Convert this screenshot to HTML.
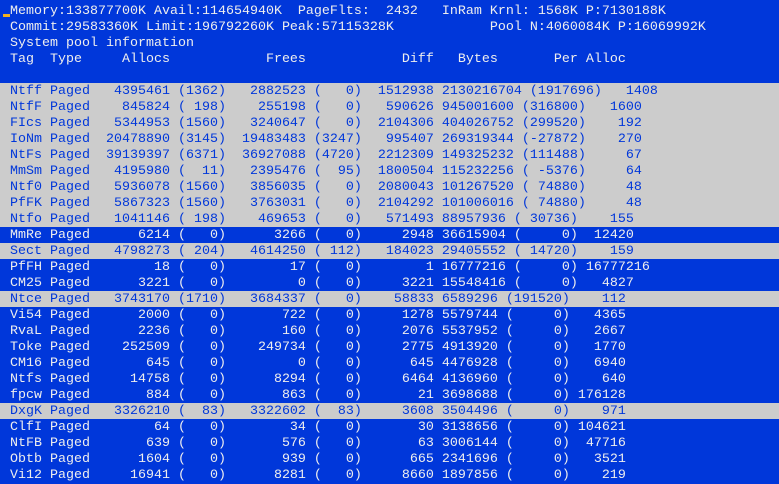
<!DOCTYPE html>
<html><head><meta charset="utf-8"><style>
html,body{margin:0;padding:0;width:779px;height:483px;overflow:hidden;background:#0037DA;}
#c{position:absolute;left:0;top:3px;width:779px;font-family:"Liberation Mono",monospace;font-size:13.33px;}
.l{height:16px;line-height:17px;white-space:pre;padding-left:10px;color:#eeeeee;}
.g{background:#cccccc;color:#0037DA;}
#cur{position:absolute;left:3px;top:14px;width:7px;height:3px;background:#f0b020;}
</style></head><body>
<div id="cur"></div>
<div id="c">
<div class="l">Memory:133877700K Avail:114654940K  PageFlts:  2432   InRam Krnl: 1568K P:7130188K</div>
<div class="l">Commit:29583360K Limit:196792260K Peak:57115328K            Pool N:4060084K P:16069992K</div>
<div class="l">System pool information</div>
<div class="l">Tag  Type     Allocs            Frees            Diff   Bytes       Per Alloc</div>
<div class="l"> </div>
<div class="l g">Ntff Paged   4395461 (1362)   2882523 (   0)  1512938 2130216704 (1917696)   1408</div>
<div class="l g">NtfF Paged    845824 ( 198)    255198 (   0)   590626 945001600 (316800)   1600</div>
<div class="l g">FIcs Paged   5344953 (1560)   3240647 (   0)  2104306 404026752 (299520)    192</div>
<div class="l g">IoNm Paged  20478890 (3145)  19483483 (3247)   995407 269319344 (-27872)    270</div>
<div class="l g">NtFs Paged  39139397 (6371)  36927088 (4720)  2212309 149325232 (111488)     67</div>
<div class="l g">MmSm Paged   4195980 (  11)   2395476 (  95)  1800504 115232256 ( -5376)     64</div>
<div class="l g">Ntf0 Paged   5936078 (1560)   3856035 (   0)  2080043 101267520 ( 74880)     48</div>
<div class="l g">PfFK Paged   5867323 (1560)   3763031 (   0)  2104292 101006016 ( 74880)     48</div>
<div class="l g">Ntfo Paged   1041146 ( 198)    469653 (   0)   571493 88957936 ( 30736)    155</div>
<div class="l">MmRe Paged      6214 (   0)      3266 (   0)     2948 36615904 (     0)  12420</div>
<div class="l g">Sect Paged   4798273 ( 204)   4614250 ( 112)   184023 29405552 ( 14720)    159</div>
<div class="l">PfFH Paged        18 (   0)        17 (   0)        1 16777216 (     0) 16777216</div>
<div class="l">CM25 Paged      3221 (   0)         0 (   0)     3221 15548416 (     0)   4827</div>
<div class="l g">Ntce Paged   3743170 (1710)   3684337 (   0)    58833 6589296 (191520)    112</div>
<div class="l">Vi54 Paged      2000 (   0)       722 (   0)     1278 5579744 (     0)   4365</div>
<div class="l">RvaL Paged      2236 (   0)       160 (   0)     2076 5537952 (     0)   2667</div>
<div class="l">Toke Paged    252509 (   0)    249734 (   0)     2775 4913920 (     0)   1770</div>
<div class="l">CM16 Paged       645 (   0)         0 (   0)      645 4476928 (     0)   6940</div>
<div class="l">Ntfs Paged     14758 (   0)      8294 (   0)     6464 4136960 (     0)    640</div>
<div class="l">fpcw Paged       884 (   0)       863 (   0)       21 3698688 (     0) 176128</div>
<div class="l g">DxgK Paged   3326210 (  83)   3322602 (  83)     3608 3504496 (     0)    971</div>
<div class="l">ClfI Paged        64 (   0)        34 (   0)       30 3138656 (     0) 104621</div>
<div class="l">NtFB Paged       639 (   0)       576 (   0)       63 3006144 (     0)  47716</div>
<div class="l">Obtb Paged      1604 (   0)       939 (   0)      665 2341696 (     0)   3521</div>
<div class="l">Vi12 Paged     16941 (   0)      8281 (   0)     8660 1897856 (     0)    219</div>
</div>
</body></html>
